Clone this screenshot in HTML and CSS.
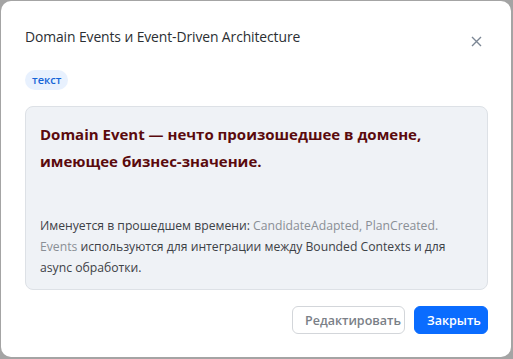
FILE: index.html
```html
<!DOCTYPE html>
<html lang="ru">
<head>
  <meta charset="UTF-8" />
  <title>Domain Events</title>
  <link rel="stylesheet" href="styles.css">
</head>
<body>

<div class="modal">
  <div class="modal-header">
    <h2 class="modal-title">Domain Events и Event-Driven Architecture</h2>
    <button class="btn-close" aria-label="Закрыть">
      <svg width="11" height="11" viewBox="0 0 11 11"><path d="M1 1L10 10M10 1L1 10" stroke="#7b8694" stroke-width="1.4" fill="none"/></svg>
    </button>
  </div>

  <span class="tag">текст</span>

  <div class="card">
    <p class="card-lead">Domain Event — нечто произошедшее в домене, имеющее бизнес-значение.</p>
    <p class="card-text">Именуется в прошедшем времени: <span class="muted">CandidateAdapted, PlanCreated.</span> <span class="muted">Events</span> используются для интеграции между Bounded Contexts и для async обработки.</p>
  </div>

  <div class="modal-footer">
    <button class="btn btn-outline">Редактировать</button>
    <button class="btn btn-primary">Закрыть</button>
  </div>
</div>

</body>
</html>
```

FILE: styles.css
```css
* { margin: 0; padding: 0; box-sizing: border-box; }

body {
  font-family: 'Open Sans', 'Noto Sans', sans-serif;
  background: #a4a4a4;
  padding: 1px;
  color: #212529;
}

.modal {
  width: 510px;
  height: 356px;
  background: #fff;
  border-radius: 10px;
  padding: 25px 23px 0 24px;
  display: flex;
  flex-direction: column;
  align-items: flex-start;
}

.modal-header {
  width: 100%;
  display: flex;
  justify-content: space-between;
  align-items: flex-start;
}

.modal-title {
  font-size: 13.9px;
  font-weight: 500;
  line-height: 22px;
  color: #2b2f33;
  letter-spacing: -0.1px;
}

.btn-close {
  border: none;
  background: none;
  margin: 10px 6px 0 0;
  width: 11px;
  height: 11px;
  display: flex;
}

.tag {
  margin-top: 22px;
  background: #e8f1fe;
  color: #1565d8;
  font-size: 11px;
  font-weight: 600;
  line-height: 20px;
  padding: 0 7px;
  border-radius: 10px;
}

.card {
  width: 100%;
  margin-top: 16px;
  background: #eff2f6;
  border: 1px solid #dde1e6;
  border-radius: 8px;
  padding: 14px 14px 11px 14px;
}

.card-lead {
  font-size: 15px;
  font-weight: 700;
  line-height: 27px;
  color: #5a0a0d;
  margin-bottom: 40px;
}

.card-text {
  font-size: 12.2px;
  line-height: 21px;
  color: #3d4146;
}

.muted { color: #8a8f95; }

.modal-footer {
  width: 100%;
  display: flex;
  justify-content: flex-end;
  gap: 9px;
  margin-top: 16px;
}

.btn {
  height: 28px;
  border-radius: 6px;
  font-family: inherit;
  font-size: 12.5px;
  font-weight: 600;
  padding: 0 12px;
}

.btn-outline {
  background: #fff;
  border: 1px solid #d3d6da;
  color: #7a8087;
  width: 113px;
}

.btn-primary {
  background: #0a6cff;
  border: 1px solid #0a6cff;
  color: #fff;
  width: 74px;
}
```
